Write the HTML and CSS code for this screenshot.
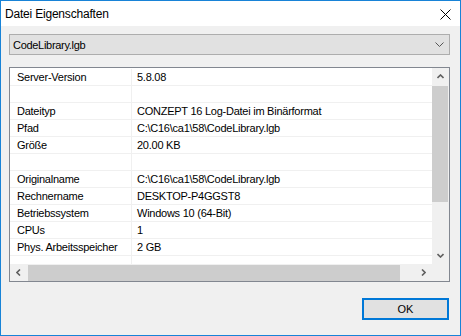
FILE: index.html
```html
<!DOCTYPE html>
<html lang="de">
<head>
    <meta charset="UTF-8">
    <title>Datei Eigenschaften</title>
    <link rel="stylesheet" href="styles.css">
</head>
<body>
    <div class="window">
        <div class="titlebar">
            <span class="title">Datei Eigenschaften</span>
            <svg class="close" width="11" height="11" viewBox="0 0 11 11">
                <path d="M0.5 0.5 L10.5 10.5 M10.5 0.5 L0.5 10.5" stroke="#000" stroke-width="1" fill="none"/>
            </svg>
        </div>
        <div class="content">
            <div class="combo">
                <span class="combo-text">CodeLibrary.lgb</span>
                <svg width="9" height="5" viewBox="0 0 9 5">
                    <path d="M0.5 0.5 L4.5 4.5 L8.5 0.5" stroke="#555" stroke-width="1" fill="none"/>
                </svg>
            </div>
            <div class="listbox">
                <div class="list-main">
                    <div class="rows">
                        <div class="row"><div class="cell key">Server-Version</div><div class="cell val">5.8.08</div></div>
                        <div class="row"><div class="cell key"></div><div class="cell val"></div></div>
                        <div class="row"><div class="cell key">Dateityp</div><div class="cell val">CONZEPT 16 Log-Datei im Binärformat</div></div>
                        <div class="row"><div class="cell key">Pfad</div><div class="cell val">C:\C16\ca1\58\CodeLibrary.lgb</div></div>
                        <div class="row"><div class="cell key">Größe</div><div class="cell val">20.00 KB</div></div>
                        <div class="row"><div class="cell key"></div><div class="cell val"></div></div>
                        <div class="row"><div class="cell key">Originalname</div><div class="cell val">C:\C16\ca1\58\CodeLibrary.lgb</div></div>
                        <div class="row"><div class="cell key">Rechnername</div><div class="cell val">DESKTOP-P4GGST8</div></div>
                        <div class="row"><div class="cell key">Betriebssystem</div><div class="cell val">Windows 10 (64-Bit)</div></div>
                        <div class="row"><div class="cell key">CPUs</div><div class="cell val">1</div></div>
                        <div class="row"><div class="cell key">Phys. Arbeitsspeicher</div><div class="cell val">2 GB</div></div>
                        <div class="row filler"><div class="cell key"></div><div class="cell val"></div></div>
                    </div>
                    <div class="vscroll">
                        <div class="sbtn">
                            <svg width="7" height="5" viewBox="0 0 7 5"><path d="M0.5 4 L3.5 1 L6.5 4" stroke="#606060" stroke-width="1.6" fill="none"/></svg>
                        </div>
                        <div class="vthumb"></div>
                        <div class="sbtn bottom">
                            <svg width="7" height="5" viewBox="0 0 7 5"><path d="M0.5 1 L3.5 4 L6.5 1" stroke="#606060" stroke-width="1.6" fill="none"/></svg>
                        </div>
                    </div>
                </div>
                <div class="hbar">
                    <div class="hscroll">
                        <div class="sbtn">
                            <svg width="5" height="7" viewBox="0 0 5 7"><path d="M4 0.5 L1 3.5 L4 6.5" stroke="#606060" stroke-width="1.6" fill="none"/></svg>
                        </div>
                        <div class="hthumb"></div>
                        <div class="sbtn right">
                            <svg width="5" height="7" viewBox="0 0 5 7"><path d="M1 0.5 L4 3.5 L1 6.5" stroke="#606060" stroke-width="1.6" fill="none"/></svg>
                        </div>
                    </div>
                    <div class="corner"></div>
                </div>
            </div>
            <div class="buttons">
                <button class="ok">OK</button>
            </div>
        </div>
    </div>
</body>
</html>
```

FILE: styles.css
```css
* {
    box-sizing: border-box;
}
body {
    margin: 0;
    font-family: "Liberation Sans", Arial, sans-serif;
    color: #000;
}
.window {
    width: 461px;
    height: 336px;
    border: 1px solid #1883d7;
    background: #f0f0f0;
    display: flex;
    flex-direction: column;
}
.titlebar {
    height: 25px;
    background: #fff;
    display: flex;
    align-items: center;
    padding-left: 4px;
    padding-right: 9px;
}
.title {
    font-size: 12px;
    letter-spacing: -0.2px;
    flex: 1;
}
.close {
    display: block;
    margin-top: 1px;
}
.content {
    padding: 8px 10px 0 8px;
}
.combo {
    height: 21px;
    border: 1px solid #adadad;
    background: #e1e1e1;
    display: flex;
    align-items: center;
    padding: 0 5px 0 3px;
}
.combo-text {
    flex: 1;
    font-size: 11px;
    letter-spacing: -0.3px;
}
.combo svg {
    display: block;
}
.listbox {
    margin-top: 12px;
    height: 215px;
    border: 1px solid #828790;
    background: #fff;
    display: flex;
    flex-direction: column;
}
.list-main {
    height: 196px;
    display: flex;
}
.rows {
    flex: 1;
    display: flex;
    flex-direction: column;
    padding-top: 1px;
    font-size: 11px;
    letter-spacing: -0.25px;
}
.row {
    height: 17px;
    display: flex;
    border-bottom: 1px solid #f0f0f0;
}
.row.filler {
    flex: 1;
    border-bottom: none;
}
.cell {
    line-height: 16px;
    white-space: nowrap;
    overflow: hidden;
}
.key {
    width: 122px;
    padding-left: 7px;
    border-right: 1px solid #f0f0f0;
}
.val {
    flex: 1;
    padding-left: 5px;
}
.vscroll {
    width: 17px;
    background: #f0f0f0;
    display: flex;
    flex-direction: column;
}
.sbtn {
    width: 17px;
    height: 17px;
    display: flex;
    align-items: center;
    justify-content: center;
    flex-shrink: 0;
}
.sbtn svg {
    display: block;
}
.sbtn.bottom {
    margin-top: auto;
}
.vthumb {
    margin: 1px 1px 0 0;
    height: 116px;
    background: #cdcdcd;
}
.hbar {
    height: 17px;
    display: flex;
}
.hscroll {
    flex: 1;
    display: flex;
    background: #f0f0f0;
}
.hthumb {
    margin: 1px 0 0 1px;
    width: 372px;
    background: #cdcdcd;
}
.sbtn.right {
    margin-left: auto;
}
.corner {
    width: 17px;
    background: #f0f0f0;
}
.buttons {
    display: flex;
    justify-content: flex-end;
    margin-top: 16px;
    padding-right: 1px;
}
.ok {
    width: 87px;
    height: 22px;
    border: 2px solid #0078d7;
    background: #e1e1e1;
    font-family: "Liberation Sans", Arial, sans-serif;
    font-size: 11px;
    color: #000;
    padding: 0;
}
```
